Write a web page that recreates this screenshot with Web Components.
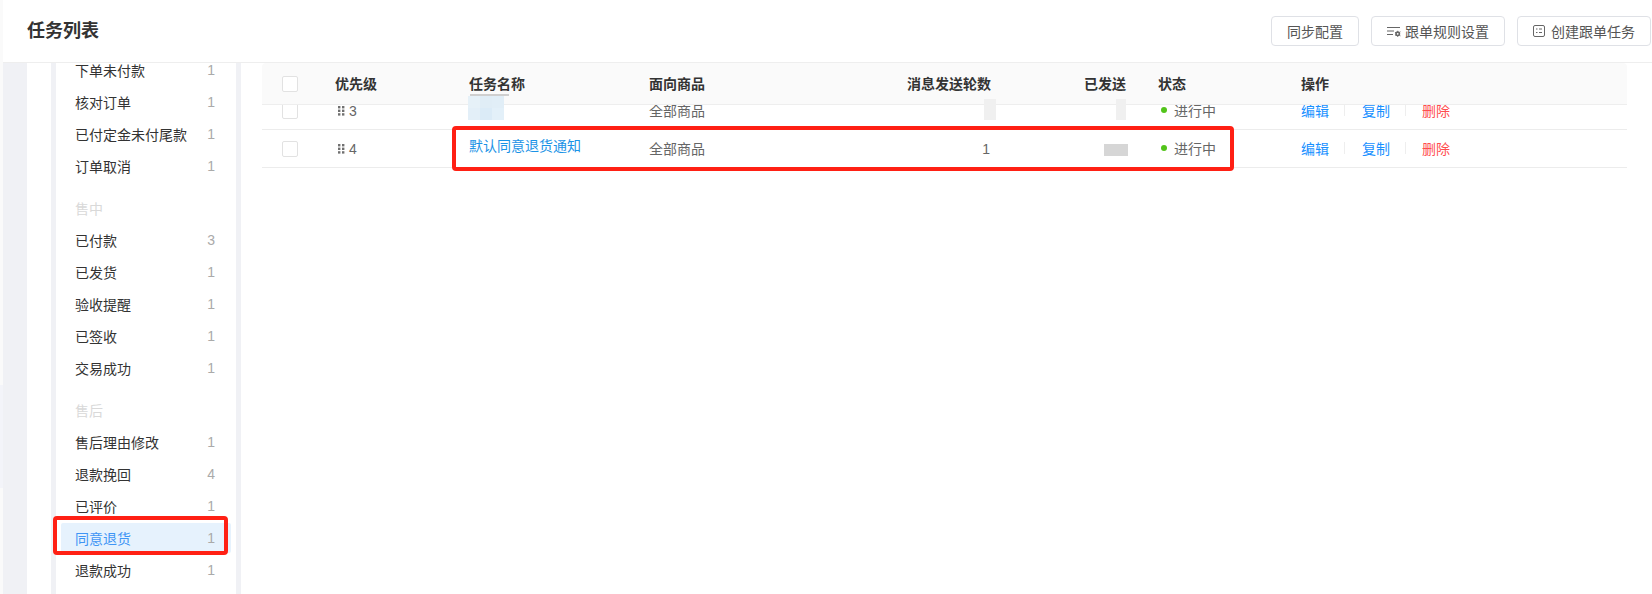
<!DOCTYPE html>
<html>
<head>
<meta charset="utf-8">
<title>任务列表</title>
<style>
  html, body { margin: 0; height: 100%; }
  body {
    height: 594px;
    overflow: hidden;
    background: #fafafa;
    font: 14px "Liberation Sans", "Noto Sans CJK SC", sans-serif;
    color: #333;
  }
</style>
</head>
<body>
<task-page>
  <task-header slot="header" title="任务列表">
    <task-button>同步配置</task-button>
    <task-button icon="rules">跟单规则设置</task-button>
    <task-button icon="create">创建跟单任务</task-button>
  </task-header>

  <side-nav slot="nav">
    <side-item count="1">下单未付款</side-item>
    <side-item count="1">核对订单</side-item>
    <side-item count="1">已付定金未付尾款</side-item>
    <side-item count="1">订单取消</side-item>
    <side-label>售中</side-label>
    <side-item count="3">已付款</side-item>
    <side-item count="1">已发货</side-item>
    <side-item count="1">验收提醒</side-item>
    <side-item count="1">已签收</side-item>
    <side-item count="1">交易成功</side-item>
    <side-label>售后</side-label>
    <side-item count="1">售后理由修改</side-item>
    <side-item count="4">退款挽回</side-item>
    <side-item count="1">已评价</side-item>
    <side-item count="1" active>同意退货</side-item>
    <side-item count="1">退款成功</side-item>
  </side-nav>

  <task-table slot="main">
    <task-row priority="3" goods="全部商品" status="进行中"></task-row>
    <task-row priority="4" name="默认同意退货通知" goods="全部商品" rounds="1" status="进行中"></task-row>
  </task-table>

  <!-- things painted over the screenshot: red marks and mosaic patches -->
  <mark-box style="left:53px;top:516px;width:175px;height:39px"></mark-box>
  <mark-box style="left:452px;top:126px;width:782px;height:45px"></mark-box>
  <mosaic-patch style="left:0;top:385px;width:3px;height:103px;background:#f3f4f9"></mosaic-patch>
  <mosaic-patch style="left:470px;top:94px;width:39px;height:2px;background:#cfcfcf"></mosaic-patch>
  <mosaic-patch style="left:468px;top:96px;width:36px;height:12px;background:linear-gradient(90deg,#e6f1f8 12px,#e0edf6 12px,#e0edf6 24px,#e1eef7 24px)"></mosaic-patch>
  <mosaic-patch style="left:468px;top:108px;width:36px;height:12px;background:linear-gradient(90deg,#e3eff8 12px,#dbebf7 12px,#dbebf7 24px,#e3f0f9 24px)"></mosaic-patch>
  <mosaic-patch style="left:984px;top:99px;width:12px;height:21px;background:#f0f0f0"></mosaic-patch>
  <mosaic-patch style="left:1116px;top:99px;width:10px;height:21px;background:#f0f0f0"></mosaic-patch>
  <mosaic-patch style="left:1104px;top:144px;width:24px;height:12px;background:#d6d6d6"></mosaic-patch>
</task-page>

<script>
  function define(name, html) {
    customElements.define(name, class extends HTMLElement {
      constructor() {
        super();
        this.attachShadow({ mode: "open" });
        this.shadowRoot.innerHTML = typeof html === "function" ? html(this) : html;
      }
    });
  }

  define("task-page", `
    <style>
      :host { display: flex; height: 594px; position: relative; }
      .rail { width: 3px; flex: none; }
      .wrap { flex: 1; min-width: 0; display: flex; flex-direction: column; }
      .body { flex: 1; min-height: 0; display: flex; background: #f0f1f5; padding-left: 24px; }
      .pad { width: 24px; background: #fff; flex: none; }
      .nav { width: 180px; margin: 0 5px; flex: none; background: #fff; overflow: hidden; }
      .main { flex: 1; min-width: 0; background: #fff; padding: 0 25px 0 21px; }
    </style>
    <div class="rail"></div>
    <div class="wrap">
      <slot name="header"></slot>
      <div class="body">
        <div class="pad"></div>
        <div class="nav"><slot name="nav"></slot></div>
        <div class="main"><slot name="main"></slot></div>
      </div>
    </div>
    <slot></slot>
  `);

  define("task-header", (el) => `
    <style>
      :host {
        display: flex; align-items: center; justify-content: space-between;
        height: 63px; box-sizing: border-box; padding: 0 1px 0 24px;
        background: #fff; border-bottom: 1px solid #eeeeee; flex: none;
      }
      h1 { margin: 0; font-size: 18px; line-height: 26px; font-weight: 700; color: #333; }
      .btns { display: flex; gap: 12px; }
    </style>
    <h1>${el.getAttribute("title")}</h1>
    <div class="btns"><slot></slot></div>
  `);

  const ICONS = {
    rules: `<svg width="14" height="14" viewBox="0 0 14 14" fill="none" stroke="#666">
      <path d="M0 3.5h13M0 7h7M0 10.5h6"/>
      <circle cx="10.7" cy="9.8" r="1.7" stroke-width="1.6"/>
      <path d="M10.7 6.8v1M10.7 11.8v1M8 8.3l.9.5M12.5 11.3l.9.5M8 11.3l.9-.5M12.5 8.3l.9-.5" stroke-width="1"/>
    </svg>`,
    create: `<svg width="12" height="12" viewBox="0 0 12 12" fill="none" stroke="#666">
      <rect x=".5" y=".5" width="11" height="11" rx="1.5"/>
      <path d="M3 4h1.5M6 4h3M3 7.5h1.5M6 7.5h3"/>
    </svg>`
  };

  define("task-button", (el) => {
    const icon = el.getAttribute("icon");
    return `
    <style>
      :host {
        display: inline-flex; align-items: center; justify-content: center;
        gap: ${icon === "create" ? 6 : 4}px;
        height: 30px; box-sizing: border-box; padding: 0 15px;
        border: 1px solid #dfe1e6; border-radius: 4px; background: #fff;
        color: #555; font-size: 14px; white-space: nowrap;
      }
      svg { display: block; flex: none; }
    </style>
    ${ICONS[icon] || ""}<slot></slot>
  `;
  });

  define("side-nav", `
    <style>
      :host { display: block; margin-top: -9px; padding-left: 5px; width: 170px; }
    </style>
    <slot></slot>
  `);

  define("side-item", (el) => `
    <style>
      :host {
        display: flex; align-items: center; justify-content: space-between;
        height: 32px; box-sizing: border-box; padding: 0 16px 0 14px;
        font-size: 14px; color: #333; position: relative;
      }
      :host([active]) { color: #3f95f5; }
      :host([active])::before {
        content: ""; position: absolute; left: 0; right: 0; top: 1px; bottom: 1px;
        background: #e6f2fd; border-radius: 2px; z-index: 0;
      }
      span { position: relative; z-index: 1; }
      .n { color: #aaa; }
    </style>
    <span><slot></slot></span><span class="n">${el.getAttribute("count")}</span>
  `);

  define("side-label", `
    <style>
      :host {
        display: flex; align-items: center; height: 42px; padding: 10px 0 0 14px;
        box-sizing: border-box; font-size: 14px; color: #d9d9d9;
      }
    </style>
    <slot></slot>
  `);

  const COLS = "73px 134px 180px 150px 192px 135px 175px 1fr";

  define("check-box", `
    <style>
      :host {
        display: block; width: 16px; height: 16px; box-sizing: border-box;
        border: 1px solid #e2e2e2; border-radius: 2px; background: #fff;
      }
    </style>
  `);

  define("task-table", `
    <style>
      :host { display: block; }
      .head {
        display: grid; grid-template-columns: ${COLS}; align-items: center;
        height: 42px; box-sizing: border-box; background: #fafafa;
        border-bottom: 1px solid #eeeeee;
        border-radius: 4px 4px 0 0;
        font-weight: 700; color: #333; position: relative; z-index: 1;
      }
      .head check-box { margin-left: 20px; }
      .head div { padding-bottom: 2px; }
      .r { text-align: right; }
      .st { padding-left: 32px; }
      .rows { margin-top: -13px; }
    </style>
    <div class="head">
      <check-box></check-box>
      <div>优先级</div>
      <div>任务名称</div>
      <div>面向商品</div>
      <div class="r">消息发送轮数</div>
      <div class="r">已发送</div>
      <div class="st">状态</div>
      <div>操作</div>
    </div>
    <div class="rows"><slot></slot></div>
  `);

  define("task-row", (el) => `
    <style>
      :host {
        display: grid; grid-template-columns: ${COLS}; align-items: center;
        height: 38px; box-sizing: border-box; border-bottom: 1px solid #ececec;
        color: #666; font-size: 14px;
      }
      check-box { margin-left: 20px; }
      .prio { display: flex; align-items: center; gap: 4px; padding-left: 3px; }
      .prio svg { display: block; }
      .name { color: #1b93e6; position: relative; top: -4px; }
      .goods, .st, .ops { padding-bottom: 2px; }
      .rounds { text-align: right; padding-right: 1px; }
      .st { padding-left: 35px; display: flex; align-items: center; gap: 7px; }
      .dot { width: 6px; height: 6px; border-radius: 50%; background: #52c41a; }
      .ops { display: flex; align-items: center; }
      .ops a { color: #1890ff; text-decoration: none; }
      .ops a.del { color: #ff4d4f; }
      .ops i { width: 1px; height: 12px; background: #eeeeee; margin: 0 17px 0 15px; }
      .ops i:last-of-type { margin-right: 16px; }
    </style>
    <check-box></check-box>
    <div class="prio">
      <svg width="7" height="10" viewBox="0 0 7 10" fill="#707070">
        <rect width="2.4" height="2.4"/><rect x="4" width="2.4" height="2.4"/>
        <rect y="3.6" width="2.4" height="2.4"/><rect x="4" y="3.6" width="2.4" height="2.4"/>
        <rect y="7.2" width="2.4" height="2.4"/><rect x="4" y="7.2" width="2.4" height="2.4"/>
      </svg>
      <span>${el.getAttribute("priority")}</span>
    </div>
    <div class="name">${el.getAttribute("name") || ""}</div>
    <div class="goods">${el.getAttribute("goods")}</div>
    <div class="rounds">${el.getAttribute("rounds") || ""}</div>
    <div></div>
    <div class="st"><span class="dot"></span>${el.getAttribute("status")}</div>
    <div class="ops"><a>编辑</a><i></i><a>复制</a><i></i><a class="del">删除</a></div>
  `);

  define("mark-box", `
    <style>
      :host {
        position: absolute; display: block; box-sizing: border-box;
        border: 4px solid #ff2014; border-radius: 4px; z-index: 5;
      }
    </style>
  `);

  define("mosaic-patch", `
    <style>
      :host { position: absolute; display: block; z-index: 4; }
    </style>
  `);
</script>
</body>
</html>
